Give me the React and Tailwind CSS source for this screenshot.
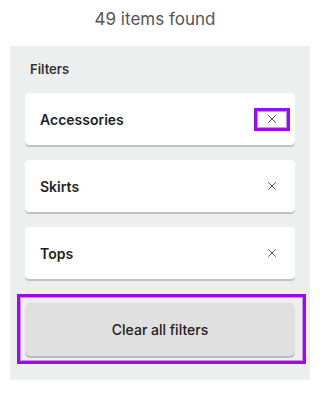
import React from "react";

function XIcon() {
  return (
    <svg width="10" height="10" viewBox="0 0 10 10" className="block">
      <path d="M1.5 1.5L8.5 8.5M8.5 1.5L1.5 8.5" stroke="#555" strokeWidth="1" strokeLinecap="round" />
    </svg>
  );
}

function Card({ label, highlighted }) {
  return (
    <div className="flex h-[52px] items-center justify-between rounded-[4px] bg-white pl-[15px] pr-[5px] shadow-[0_2px_0_#c2c2c2]">
      <span className="text-[14px] font-semibold text-[#222]">{label}</span>
      <div
        className={
          "flex h-[23px] w-[36px] items-center justify-center " +
          (highlighted ? "border-[3px] border-[#9a0ee6] outline outline-1 outline-[#c98cf0] [outline-offset:-4px]" : "")
        }
      >
        <XIcon />
      </div>
    </div>
  );
}

export default function App() {
  return (
    <div className="h-[393px] w-[325px] bg-white" style={{ fontFamily: "Inter, 'Open Sans', sans-serif" }}>
      <div className="flex h-[46px] w-[310px] items-center justify-center pb-[6px] text-[17px] text-[#555]">49 items found</div>
      <div className="ml-[10px] h-[334px] w-[300px] bg-[#edefee] px-[15px] pt-[15px]">
        <div className="pl-[5px] text-[13px] font-semibold leading-[16px] text-[#333]">Filters</div>
        <div className="mt-[16px] flex flex-col gap-[15px]">
          <Card label="Accessories" highlighted />
          <Card label="Skirts" />
          <Card label="Tops" />
        </div>
        <div className="relative mt-[24px]">
          <div className="pointer-events-none absolute -left-[8px] -right-[11px] -top-[9px] -bottom-[8px] border-[3px] border-[#9a0ee6] outline outline-1 outline-[#c98cf0] [outline-offset:-4px]" />
          <button className="flex h-[53px] w-full items-center justify-center rounded-[5px] bg-[#e0e0e0] text-[14px] font-medium text-[#222] shadow-[0_2px_0_#bdbdbd]">
            Clear all filters
          </button>
        </div>
      </div>
    </div>
  );
}
